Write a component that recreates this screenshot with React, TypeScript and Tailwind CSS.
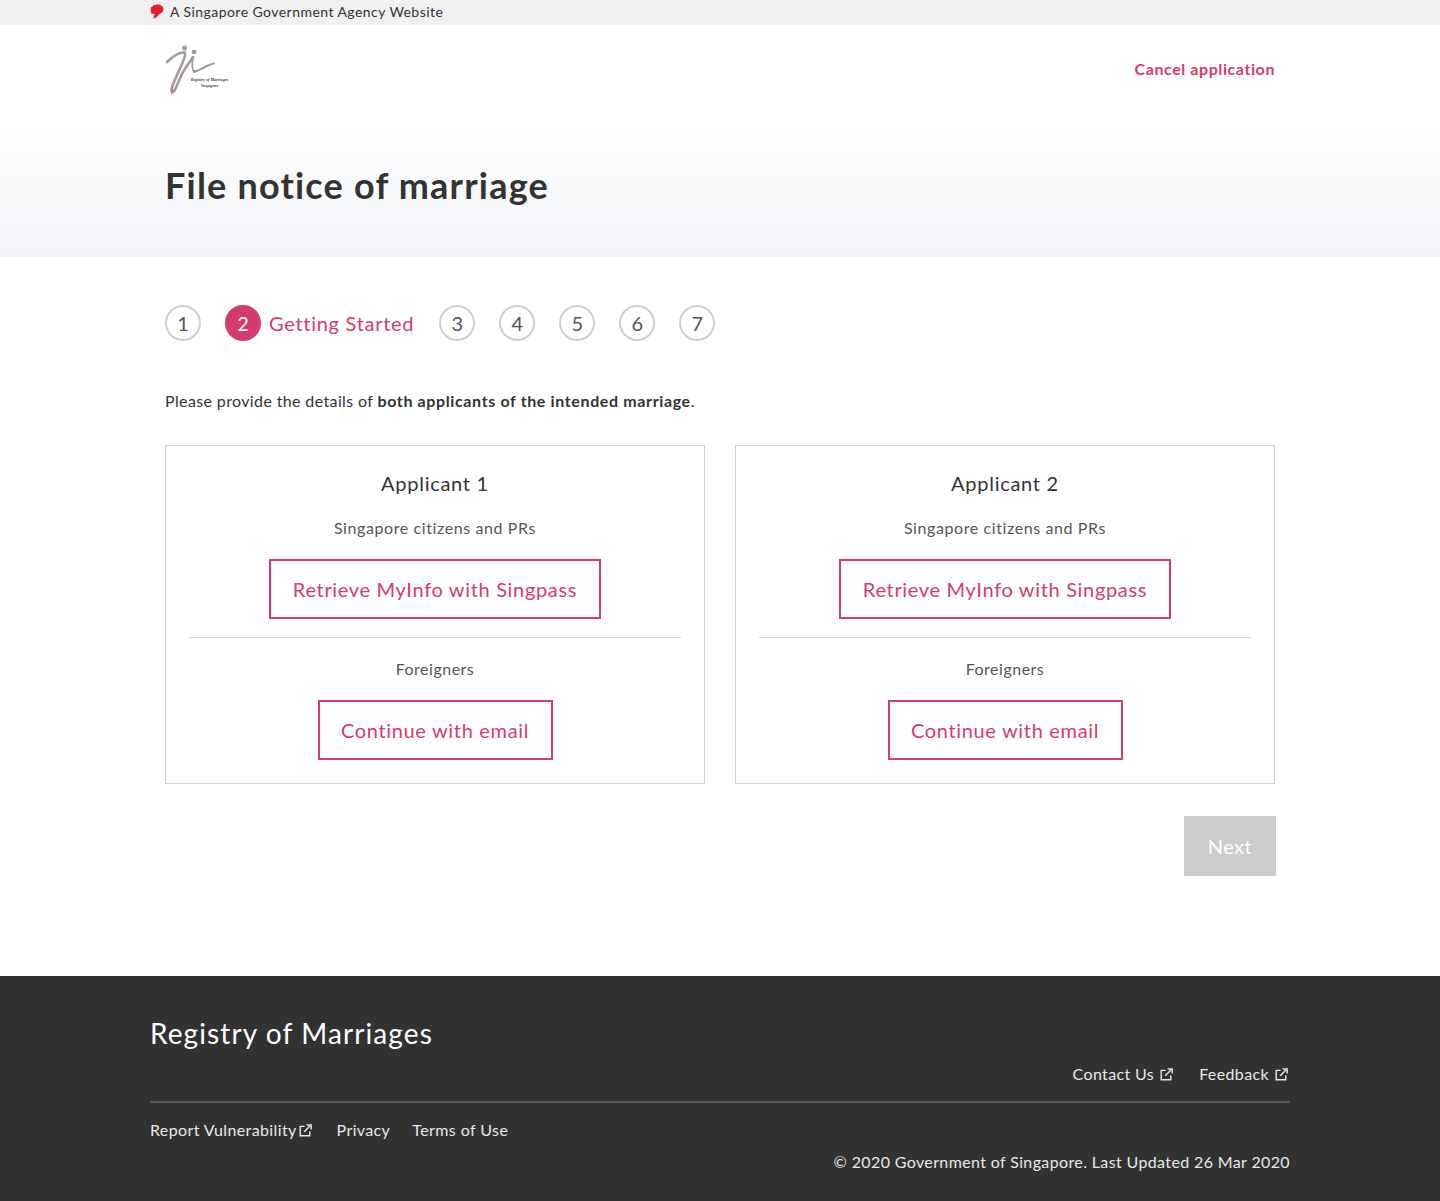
import React from "react";

const F = { fontFamily: '"Lato", "Noto Sans", sans-serif' };

function Lion() {
  return (
    <svg width="14" height="15" viewBox="0 0 14 15" className="shrink-0">
      <path d="M0.8 3.5 L2.6 2.6 L3.4 1 L5.2 1.2 L6.4 0.2 L8 0.8 L9.6 0.6 L11 1.6 L12.6 2.4 L13.4 4.6 L13.2 6.6 L12 8.4 L10.6 9.6 L8.6 10.6 L7.4 12.2 L6 13.8 L3.6 14.6 L3.8 12.6 L4.6 10.4 L4.2 9.6 L2.6 10 L0.8 9.2 L1.4 7.6 L0.2 6.6 L1 5.2 Z" fill="#e0202c" />
    </svg>
  );
}

function Logo() {
  return (
    <div className="relative w-[66px] h-[50px]">
      <svg width="66" height="50" viewBox="0 0 66 50" className="absolute left-0 top-0">
        <circle cx="19.5" cy="4" r="2.5" fill="#a39c9c" />
        <circle cx="29" cy="8" r="2.4" fill="#a39c9c" />
        <path d="M2 18 C8 12 14 8 20 8.5 C21.5 12 16 22 12 31 C9 38 5 46 7 48.5 C10 48.5 13 38 17 30 C20 24 25 18 28 13" fill="none" stroke="#a39c9c" strokeWidth="2.6" strokeLinecap="round" />
        <path d="M28 13 C27 19 27 25 29 28 C34 27 41 21 49 19.5" fill="none" stroke="#a39c9c" strokeWidth="1.9" strokeLinecap="round" />
        <path d="M6 46 L8 47.5" stroke="#d8527e" strokeWidth="1.2" />
        <path d="M29 27 L32 26.5" stroke="#d8527e" strokeWidth="0.9" />
      </svg>
      <div className="absolute left-[21px] top-[33px] w-[47px] text-center text-[4.2px] leading-[6px] text-[#444] italic font-bold whitespace-nowrap" style={{ fontFamily: '"Liberation Serif", serif' }}>
        <div>Registry of Marriages</div>
        <div>Singapore</div>
      </div>
    </div>
  );
}

function ExtIcon({ className = "" }: { className?: string }) {
  return (
    <svg width="13" height="13" viewBox="0 0 13 13" fill="none" stroke="currentColor" strokeWidth="1.4" className={className}>
      <path d="M10.8 7.6 V11.8 H1.2 V2.4 H5.6" />
      <path d="M5.2 7.8 L11.4 1.6" />
      <path d="M7.6 1 H12.2 V5.6" />
    </svg>
  );
}

function Step({ n, active, label }: { n: number; active?: boolean; label?: string }) {
  return (
    <div className="flex items-center">
      <div
        className={
          active
            ? "w-9 h-9 rounded-full bg-[#d53c6c] text-white flex items-center justify-center text-[20px]"
            : "w-9 h-9 rounded-full border-2 border-[#cfcfcf] text-[#555] flex items-center justify-center text-[20px]"
        }
      >
        {n}
      </div>
      {label && <span className="ml-2 text-[20px] text-[#d53c6c] tracking-[0.72px]">{label}</span>}
    </div>
  );
}

function OutlineBtn({ children, width }: { children: React.ReactNode; width: string }) {
  return (
    <button className={`h-[60px] ${width} border-2 border-[#d53c6c] text-[#d53c6c] text-[20px] tracking-[0.67px] flex items-center justify-center`}>
      {children}
    </button>
  );
}

function Card({ title }: { title: string }) {
  return (
    <div className="w-[540px] h-[339px] border border-[#d2d2d2] px-[23px] flex flex-col items-center">
      <div className="mt-[22px] h-[30px] leading-[30px] text-[20px] text-[#333] tracking-[0.72px]">{title}</div>
      <div className="mt-[20px] h-[20px] leading-[20px] text-[16px] text-[#555] tracking-[0.6px]">Singapore citizens and PRs</div>
      <div className="mt-[21px]">
        <OutlineBtn width="w-[332px]">Retrieve MyInfo with Singpass</OutlineBtn>
      </div>
      <div className="mt-[18px] w-full border-t border-[#d2d2d2]" />
      <div className="mt-[21px] h-[20px] leading-[20px] text-[16px] text-[#555] tracking-[0.5px]">Foreigners</div>
      <div className="mt-[21px]">
        <OutlineBtn width="w-[235px]">Continue with email</OutlineBtn>
      </div>
    </div>
  );
}

export default function App() {
  return (
    <div className="w-[1440px] h-[1201px] bg-white flex flex-col overflow-hidden" style={F}>
      <div className="h-[25px] bg-[#f0f0f0] shrink-0">
        <div className="w-[1140px] mx-auto flex items-center h-full gap-[6px] text-[14px] text-[#333] tracking-[0.45px] -mt-px">
          <Lion />
          <span>A Singapore Government Agency Website</span>
        </div>
      </div>

      <div className="h-[232px] shrink-0 bg-gradient-to-b from-white from-[45%] to-[#f1f3f7]">
        <div className="w-[1110px] mx-auto">
          <div className="flex justify-between items-start pt-[19px]">
            <Logo />
            <a className="mt-[13px] text-[16px] font-bold text-[#d53c6c] tracking-[0.58px]">Cancel application</a>
          </div>
          <h1 className="mt-[67px] text-[36px] leading-[48px] font-bold text-[#333] tracking-[1.2px]">File notice of marriage</h1>
        </div>
      </div>

      <div className="w-[1110px] mx-auto flex-1">
        <div className="mt-[48px] flex items-center">
          <Step n={1} />
          <div className="ml-6"><Step n={2} active label="Getting Started" /></div>
          <div className="ml-[25px] flex gap-6">
            <Step n={3} /><Step n={4} /><Step n={5} /><Step n={6} /><Step n={7} />
          </div>
        </div>
        <p className="mt-[48px] h-[24px] leading-[24px] text-[16px] text-[#333] tracking-[0.37px]">
          Please provide the details of <b className="tracking-[0.63px]">both applicants of the intended marriage</b>.
        </p>
        <div className="mt-[32px] flex gap-[30px]">
          <Card title="Applicant 1" />
          <Card title="Applicant 2" />
        </div>
        <div className="mt-[32px] flex justify-end -mr-px">
          <button className="w-[92px] h-[60px] bg-[#cccccc] text-white text-[20px] tracking-[0.5px]">Next</button>
        </div>
      </div>

      <div className="h-[225px] shrink-0 bg-[#323232] text-[#e8e8e8]">
        <div className="w-[1140px] mx-auto">
          <div className="pt-[38px] h-[38px] text-[28px] leading-[38px] text-white tracking-[1.1px] box-content">Registry of Marriages</div>
          <div className="mt-[3px] h-[48px] flex justify-end gap-[26px] text-[16px] tracking-[0.37px] border-b-2 border-[#5c5c5c] pt-[7px] items-start">
            <span className="flex items-center gap-[6px]">Contact Us <ExtIcon /></span>
            <span className="flex items-center gap-[6px] mr-[2px]">Feedback <ExtIcon /></span>
          </div>
          <div className="mt-[15px] flex text-[16px] tracking-[0.37px]">
            <span className="flex items-center gap-[2px]">Report Vulnerability <ExtIcon /></span>
            <span className="ml-[25px]">Privacy</span>
            <span className="ml-[22px] tracking-[0.42px]">Terms of Use</span>
          </div>
          <div className="mt-[8px] text-right text-[16px] tracking-[0.37px]">© 2020 Government of Singapore. Last Updated 26 Mar 2020</div>
        </div>
      </div>
    </div>
  );
}
